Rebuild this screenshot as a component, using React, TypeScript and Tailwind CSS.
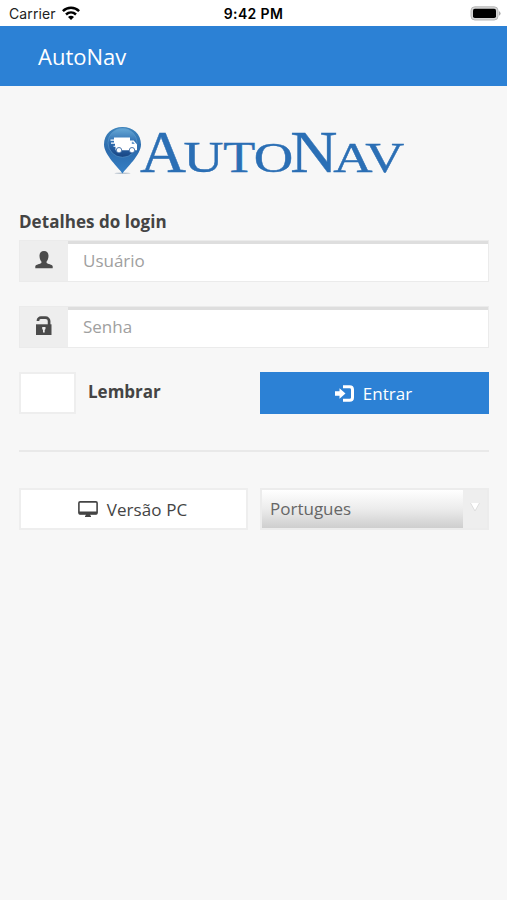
import React from "react";

type Glyph = { char: string; x: number; size: number; width: number };

const wordmark: Glyph[] = [
  { char: "A", x: 40, size: 60, width: 46 },
  { char: "U", x: 83.6, size: 43.5, width: 40 },
  { char: "T", x: 123.3, size: 43.5, width: 32 },
  { char: "O", x: 153.8, size: 43, width: 39.5 },
  { char: "N", x: 190.2, size: 60, width: 47.2 },
  { char: "A", x: 233.2, size: 43, width: 39.3 },
  { char: "V", x: 265.2, size: 43, width: 39 },
];

function Logo() {
  return (
    <svg className="mx-auto block h-[60px] w-[308px] overflow-visible" viewBox="0 0 308 60">
      <defs>
        <linearGradient id="pin" x1="0" y1="0" x2="0" y2="1">
          <stop offset="0" stopColor="#3e83ba" />
          <stop offset="0.5" stopColor="#2c6bad" />
          <stop offset="1" stopColor="#3580c6" />
        </linearGradient>
        <linearGradient id="disc" x1="0" y1="0" x2="0" y2="1">
          <stop offset="0" stopColor="#67a9d6" />
          <stop offset="0.5" stopColor="#2d6cb0" />
          <stop offset="1" stopColor="#174482" />
        </linearGradient>
      </defs>
      <ellipse cx="22.5" cy="53.2" rx="8" ry="0.8" fill="#bcc6d0" />
      <path d="M22.5 53.5C19 48 4 35 4 24.5C4 14 12 7 22.5 7S41 14 41 24.5C41 35 26 48 22.5 53.5Z" fill="url(#pin)" />
      <circle cx="22.5" cy="22.8" r="14.5" fill="url(#disc)" stroke="#5c9bcd" strokeWidth="0.6" />
      <path d="M14 17.5h16v3h3.7l3.3 4v5.7H15.5v-3.4h-2v-1h1.5v-2h-4v-1.2h3v-1.8h-3.5v-1.2H14Z" fill="#fff" />
      <path d="M31.8 21.7h1.3l1.7 2.3h-3Z" fill="#6a9bcd" />
      <circle cx="19" cy="30.2" r="2.7" fill="#fff" stroke="#3868a4" strokeWidth="0.9" />
      <circle cx="32" cy="30.2" r="2.7" fill="#fff" stroke="#3868a4" strokeWidth="0.9" />
      {wordmark.map((g) => (
        <text
          key={g.x}
          x={g.x}
          y={51.7}
          fontSize={g.size}
          textLength={g.width}
          lengthAdjust="spacingAndGlyphs"
          className="font-['Liberation_Serif',serif]"
          fill="#2b6fb5"
          stroke="#2b6fb5"
          strokeWidth="0.4"
        >
          {g.char}
        </text>
      ))}
    </svg>
  );
}

function StatusBar() {
  return (
    <div className="grid h-[26px] grid-cols-3 items-center bg-white pr-[6px] pl-[9px] font-['Inter',sans-serif] text-black">
      <div className="flex items-center gap-[6px] text-[14px] tracking-[0.1px] text-[#222]">
        Carrier
        <svg className="h-[14px] w-[18px]" viewBox="0 0 18 14" fill="none" stroke="#000" strokeWidth="2.5">
          <path d="M0.9 5.1C5.4 0.7 12.6 0.7 17.1 5.1" />
          <path d="M4 8.5C6.9 5.8 11.1 5.8 14 8.5" />
          <path d="M9 14L6 11C7.7 9.3 10.3 9.3 12 11Z" fill="#000" stroke="none" />
        </svg>
      </div>
      <div className="pr-[3px] text-center text-[14px] font-semibold tracking-[0.35px] whitespace-nowrap">9:42 PM</div>
      <svg className="h-[15px] w-[31px] justify-self-end" viewBox="0 0 31 15">
        <rect x="1" y="0.8" width="27" height="13.2" rx="3.8" fill="#d6d6d6" stroke="#b8b8b8" strokeWidth="1" />
        <rect x="3" y="2.7" width="23" height="9.4" rx="1.8" fill="#000" />
        <path d="M29 5Q32.2 7.4 29 9.8Z" fill="#aaa" />
      </svg>
    </div>
  );
}

function UserIcon() {
  return (
    <svg className="h-[18px] w-[18px]" viewBox="0 0 18 18" fill="#4b4b4b">
      <path d="M9 0C6.1 0 4.4 2 4.5 5C4.6 7.8 5.3 9.3 6.4 10.6V12C5.2 13 0.9 13.4 0.3 15.2V17.3H17.7V15.2C17.1 13.4 12.8 13 11.6 12V10.6C12.7 9.3 13.4 7.8 13.5 5C13.6 2 11.9 0 9 0Z" />
    </svg>
  );
}

function UnlockIcon() {
  return (
    <svg className="h-[20px] w-[18px]" viewBox="0 0 18 20">
      <path d="M3 5V4.5C3 2.8 4.4 1.7 6 1.7H10.5C12.5 1.7 14.1 3.1 14.1 5V9" fill="none" stroke="#4b4b4b" strokeWidth="2.7" />
      <path d="M1 8.3H16.5V19H1Z" fill="#4b4b4b" />
      <path d="M7.2 11H10.5V13L9.7 14V16.6H8V14L7.2 13Z" fill="#eee" />
    </svg>
  );
}

function Field({ icon, placeholder, type }: { icon: React.ReactNode; placeholder: string; type: string }) {
  return (
    <div className="flex h-[42px] border border-[#ebebeb]">
      <div className="flex w-[48px] items-center justify-center bg-[#eee] pr-px pb-[3px]">{icon}</div>
      <input
        type={type}
        placeholder={placeholder}
        className="min-w-0 flex-1 border-t-[3px] border-[#dedede] bg-white px-[15px] pb-[3px] text-[17px] text-[#4b4b4b] outline-none placeholder:text-[#a0a0a0]"
      />
    </div>
  );
}

export default function App() {
  return (
    <div className="min-h-[900px] w-full bg-[#f7f7f7] font-['Open_Sans',sans-serif] text-[#444]">
      <StatusBar />
      <header className="flex h-[60px] items-center bg-[#2c81d5] pl-[38px] text-[22px] text-white">
        AutoNav
      </header>
      <main className="pt-[34px] pr-[18px] pl-[19px]">
        <Logo />
        <form className="pt-[30px]" onSubmit={(e) => e.preventDefault()}>
          <h1 className="h-[30px] text-[17px] leading-[24px] font-bold tracking-[0.04px]">Detalhes do login</h1>
          <div className="flex flex-col gap-[24px]">
            <Field type="text" placeholder="Usuário" icon={<UserIcon />} />
            <Field type="password" placeholder="Senha" icon={<UnlockIcon />} />
          </div>
          <div className="mt-[24px] grid grid-cols-[229px_1fr] gap-[12px]">
            <label className="flex items-center">
              <input type="checkbox" className="h-[42px] w-[57px] appearance-none border-2 border-[#eee] bg-white" />
              <span className="pb-[2px] pl-[12px] text-[17px] font-bold">Lembrar</span>
            </label>
            <button className="flex h-[42px] items-center justify-center gap-[9px] bg-[#2c81d5] pr-[2px] text-[17px] text-white">
              <svg className="h-[17px] w-[19px]" viewBox="0 0 19 17">
                <path d="M8 1.7H14.6C16.4 1.7 17.5 2.8 17.5 4.5V12.5C17.5 14.2 16.4 15.3 14.6 15.3H8" fill="none" stroke="#fff" strokeWidth="3" />
                <path d="M0 6.3H4.5V3.2L10.5 8.5L4.5 13.8V10.7H0Z" fill="#fff" />
              </svg>
              <span className="pt-[2px]">Entrar</span>
            </button>
          </div>
        </form>
        <hr className="mt-[36px] border-t-2 border-[#e9e9e9]" />
        <div className="mt-[36px] grid grid-cols-[229px_1fr] gap-[12px]">
          <button className="flex h-[42px] items-center justify-center gap-[9px] border-2 border-[#eee] bg-white pr-[2px] text-[17px]">
            <svg className="h-[17px] w-[20px]" viewBox="0 0 20 17">
              <rect x="0.9" y="0.9" width="18.2" height="12" rx="1.2" fill="none" stroke="#444" strokeWidth="1.6" />
              <path d="M1 10.5H19V13.3H12V14.5H13V16H7V14.5H8V13.3H1Z" fill="#444" />
            </svg>
            <span className="pt-[2px] tracking-[0.1px]">Versão PC</span>
          </button>
          <button className="flex h-[42px] border-2 border-[#ececec] text-left text-[17px] text-[#666]">
            <span className="flex h-full flex-1 items-center bg-linear-to-b from-white via-[#ececec] to-[#cecece] pl-[8px]">
              Portugues
            </span>
            <span className="flex h-full w-[24px] justify-center bg-[#eee] pt-[12px] pr-px">
              <svg className="h-[10px] w-[10px]" viewBox="0 0 10 10">
                <path d="M0.5 1H9.5L5 9Z" fill="#fff" />
                <path d="M0.5 1L5 9L9.5 1" fill="none" stroke="#d8d8d8" strokeWidth="0.8" />
              </svg>
            </span>
          </button>
        </div>
      </main>
    </div>
  );
}
